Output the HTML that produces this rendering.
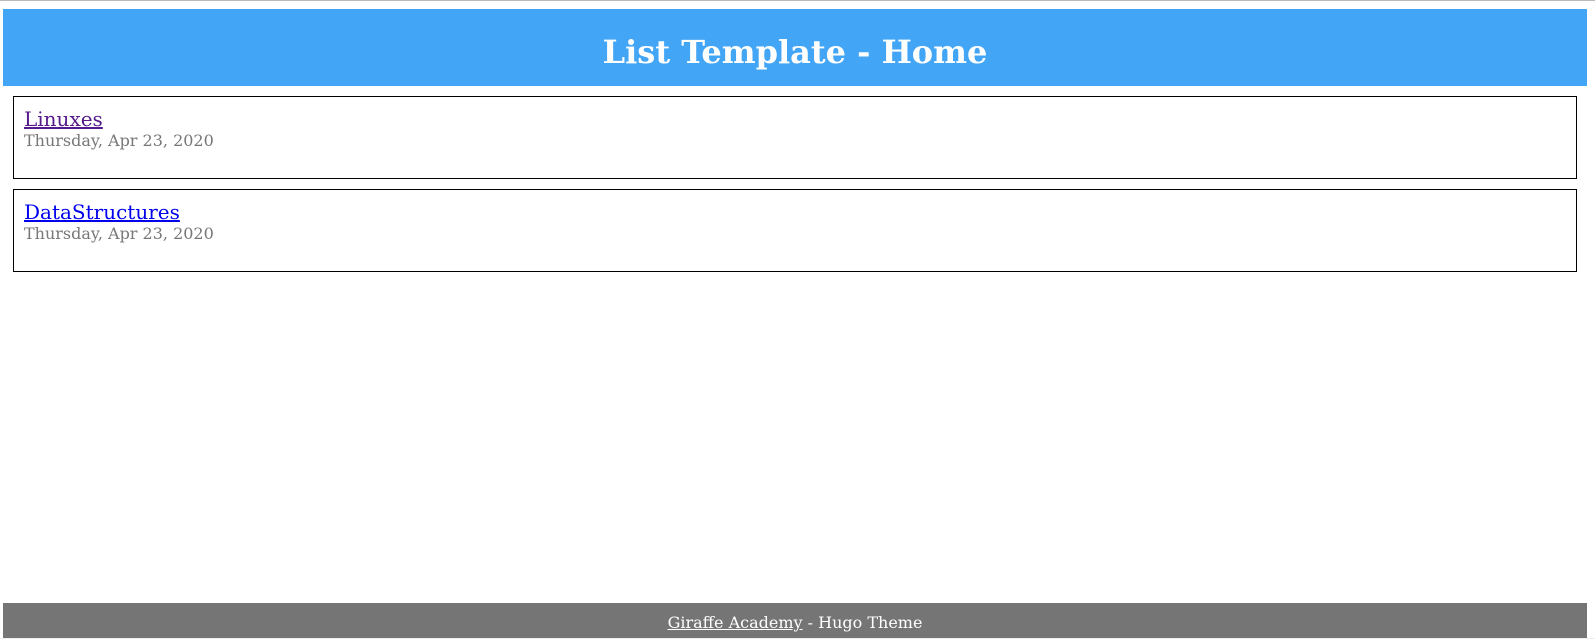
<!DOCTYPE html>
<html><head><style>
html,body{margin:0;padding:0;width:1595px;height:639px;overflow:hidden;background:#fff;font-family:"DejaVu Serif",serif;}
.topline{position:absolute;left:0;top:0;width:1595px;height:1px;background:#bbb}
.header{position:absolute;left:3px;top:9px;width:1584px;height:77px;background:#42a5f5;color:#fff;font-weight:bold;font-size:32px;text-align:center;line-height:86px}
.box{position:absolute;left:13px;width:1564px;height:83px;border:1px solid #000;box-sizing:border-box;padding:8px 10px}
.box a{font-size:20px;line-height:26px;display:block;margin-top:1px}
.date{color:#777;font-size:16px;line-height:18px}
.footer{position:absolute;left:3px;top:603px;width:1584px;height:35px;background:#757575;color:#fff;font-size:16px;text-align:center;line-height:39px}
.footer a{color:#fff}
.bot{position:absolute;left:0;top:638px;width:1595px;height:1px;background:#eee}
</style></head><body>
<div class="topline"></div>
<div class="header">List Template - Home</div>
<div class="box" style="top:96px"><a href="#" style="color:#551a8b">Linuxes</a><div class="date">Thursday, Apr 23, 2020</div></div>
<div class="box" style="top:189px"><a href="#" style="color:#0000ee">DataStructures</a><div class="date">Thursday, Apr 23, 2020</div></div>
<div class="footer"><a href="#">Giraffe Academy</a> - Hugo Theme</div>
<div class="bot"></div>
</body></html>
